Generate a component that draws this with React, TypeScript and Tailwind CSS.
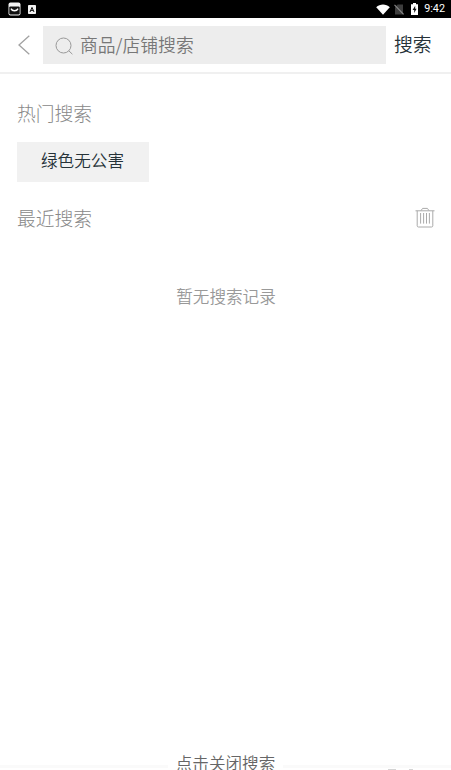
const HOT_KEYWORDS = ["绿色无公害"];

function StatusBar() {
  return (
    <div className="flex h-[18px] shrink-0 items-center justify-between bg-black pr-[6px] pl-2 text-white">
      <div className="flex items-center gap-[7px]">
        <svg width="13" height="14" viewBox="0 0 13 14" aria-hidden>
          <rect x="0.5" y="0.5" width="12" height="13" rx="2" fill="#f2f2f2" />
          <rect x="1.3" y="4.4" width="10.4" height="8" rx="1.2" fill="#111" />
          <path d="M3 6.6c1.3 2.8 5.7 2.8 7 0" fill="none" stroke="#fff" strokeWidth="1.4" />
        </svg>
        <svg width="8" height="9" viewBox="0 0 8 9" aria-hidden>
          <rect width="8" height="9" rx="0.8" fill="#f2f2f2" />
          <path d="M2 7 4 2.4 6 7M2.8 5.4h2.4" fill="none" stroke="#111" strokeWidth="1" />
        </svg>
      </div>
      <div className="flex items-center">
        <svg width="14" height="11" viewBox="0 0 14 11" aria-hidden>
          <path d="M0.2 3.2C4-.3 10-.3 13.8 3.2L7 10.8Z" fill="#fff" />
        </svg>
        <svg className="ml-[4px]" width="10" height="11" viewBox="0 0 10 11" aria-hidden>
          <path d="M3.6.5H9v10H1V3.2Z" fill="#3d3d3d" />
          <path d="M.5.8 9.6 10.4" stroke="#8a8a8a" strokeWidth="1.1" />
        </svg>
        <svg className="ml-[7px]" width="7" height="12" viewBox="0 0 7 12" aria-hidden>
          <path d="M2 0h3v1.2h2V12H0V1.2h2Z" fill="#fff" />
          <path d="M4.2 2.8 1.6 7h1.6v3l2.4-4.2H4.2Z" fill="#111" />
        </svg>
        <span className="ml-[6px] font-['Roboto',sans-serif] text-[10.8px] leading-none font-[450]">
          9:42
        </span>
      </div>
    </div>
  );
}

function SearchHeader() {
  return (
    <header className="flex h-[56px] shrink-0 items-center border-b-2 border-[#f0f0f0] pl-[18px]">
      <button type="button" aria-label="返回">
        <svg width="12" height="20" viewBox="0 0 12 20" fill="none" stroke="#a2a2a2" strokeWidth="1.3">
          <path d="M11.3.7 1 10l10.3 9.3" />
        </svg>
      </button>
      <div className="ml-[13px] flex h-[38px] w-[343px] items-center bg-[#ededed] pl-[12px]">
        <svg className="mt-px" width="18" height="18" viewBox="0 0 18 18" fill="none" stroke="#999" strokeWidth="1">
          <circle cx="8.5" cy="8.5" r="7.5" />
          <path d="m13.8 13.8 3.6 3.4" />
        </svg>
        <span className="ml-[7px] pb-[2px] text-[17.8px] leading-[36px] text-[#777]">
          商品/店铺搜索
        </span>
      </div>
      <button type="button" className="ml-[8px] pb-[3px] text-[18.8px] leading-7 text-[#263238]">
        搜索
      </button>
    </header>
  );
}

function TrashIcon() {
  return (
    <svg width="20" height="22" viewBox="0 0 20 22" fill="none" stroke="#aaa" strokeWidth="1">
      <path d="M.5 3.8h19M6 3.6 7.6 1.4h4.8L14 3.6M2.2 3.8v15c0 .7.4 1.2 1.2 1.2h13.2c.8 0 1.2-.5 1.2-1.2v-15" />
      <path d="M5.6 6v10.6M8.6 6v10.6M11.5 6v10.6M14.4 6v10.6" />
    </svg>
  );
}

export default function App() {
  return (
    <div className="flex h-[770px] w-[451px] flex-col overflow-hidden bg-white font-['Noto_Sans_CJK_SC',sans-serif] font-[350]">
      <StatusBar />
      <SearchHeader />

      <main className="flex min-h-0 flex-1 flex-col pr-[16px] pl-[17px]">
        <h2 className="mt-[25px] text-[18.8px] leading-7 font-light text-[#888]">热门搜索</h2>
        <div className="mt-[15px] flex">
          {HOT_KEYWORDS.map((keyword) => (
            <button
              key={keyword}
              type="button"
              className="h-10 w-[132px] bg-[#f1f1f1] pr-px pb-[4px] text-[16.6px] leading-6 text-[#263238]"
            >
              {keyword}
            </button>
          ))}
        </div>

        <div className="mt-[22px] flex items-center justify-between">
          <h2 className="text-[18.8px] leading-7 font-light text-[#888]">最近搜索</h2>
          <button type="button" aria-label="清空">
            <TrashIcon />
          </button>
        </div>
        <p className="mt-[52px] text-center text-[16.6px] leading-6 text-[#999]">
          暂无搜索记录
        </p>
      </main>

      <footer className="flex h-[19px] shrink-0 items-start">
        <span className="mt-[14px] h-[3px] flex-1 bg-[#fafafa]" />
        <button type="button" className="w-[115px] text-[16.6px] leading-6 text-[#666]">
          点击关闭搜索
        </button>
        <div className="flex flex-1 flex-col pt-[14px]">
          <span className="h-[3px] bg-[#fafafa]" />
          <span className="mt-px ml-[105px] flex gap-[13px]">
            <i className="h-px w-[8px] bg-[#d4d4d4]" />
            <i className="h-px w-[4px] bg-[#d4d4d4]" />
          </span>
        </div>
      </footer>
    </div>
  );
}
